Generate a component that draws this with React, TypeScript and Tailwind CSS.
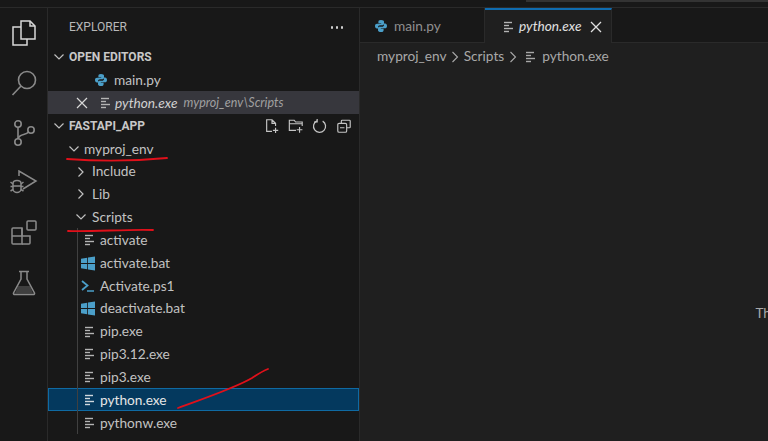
import React from "react";

const FileIcon = ({ c = "#b4b4b4" }: { c?: string }) => (
  <svg width="11" height="12" viewBox="0 0 11 12" className="shrink-0">
    <g stroke={c} strokeWidth="1.4" fill="none">
      <path d="M1 1.5H9" />
      <path d="M1 4.5H6" />
      <path d="M1 7.5H10" />
      <path d="M1 10.5H6" />
    </g>
  </svg>
);

const Win = () => (
  <svg width="14" height="15" viewBox="0 0 14 14" className="shrink-0 -ml-[3px]">
    <path d="M0 2.2 6.2 1.2V6.6H0ZM7 1.1 14 0V6.6H7ZM0 7.4H6.2V12.8L0 11.8ZM7 7.4H14V14L7 12.9Z" fill="#4b9fc9" />
  </svg>
);

const Py = () => (
  <svg width="12" height="12" viewBox="0 0 12 12" className="shrink-0">
    <path d="M6 0C3.8 0 3.4 1 3.4 1.8V3.2H6.2V3.7H2C.8 3.7 0 4.6 0 6s.7 2.4 1.9 2.4H3V7C3 5.9 3.9 5.2 5 5.2H7.6C8.4 5.2 9 4.6 9 3.8V1.8C9 .8 8 0 6 0Z" fill="#4b9fc9" />
    <path d="M6 12c2.2 0 2.6-1 2.6-1.8V8.800H5.800V8.300H10c1.200 0 2-.9 2-2.300s-.7-2.400-1.900-2.400H9V5C9 6.100 8.100 6.800 7 6.800H4.400C3.600 6.800 3 7.400 3 8.200v2C3 11.200 4 12 6 12Z" fill="#4b9fc9" />
  </svg>
);

const Chevron = ({ open }: { open: boolean }) => (
  <svg width="12" height="12" viewBox="0 0 12 12" className="shrink-0">
    <path d={open ? "M1.500 3.500 6 8l4.500-4.500" : "M3.500 1.500 8 6l-4.500 4.500"} fill="none" stroke="#c0c0c0" strokeWidth="1.200" />
  </svg>
);

const Row = ({ children, className = "" }: { children: React.ReactNode; className?: string }) => (
  <div className={`h-[22.85px] pt-[1px] flex items-center whitespace-nowrap shrink-0 ${className}`}>{children}</div>
);

const File = ({ name, icon, selected }: { name: string; icon: React.ReactNode; selected?: boolean }) => (
  <Row className={selected ? "bg-[#04395e] outline outline-1 -outline-offset-1 outline-[#0f6aa3] text-[#e6e6e6]" : ""}>
    <div className="w-[31px] shrink-0" />
    <div className="w-[21px] flex justify-center shrink-0">{icon}</div>
    <span>{name}</span>
  </Row>
);

const Folder = ({ name, open }: { name: string; open: boolean }) => (
  <Row>
    <div className="w-[27px] shrink-0" />
    <Chevron open={open} />
    <span className="ml-[5px]">{name}</span>
  </Row>
);

const Activity = () => (
  <div className="w-[48px] shrink-0 flex flex-col items-center pt-[12px] gap-[24px] border-r border-[#2a2a2a] bg-[#181818] relative">
    <svg width="26" height="26" viewBox="0 0 26 26" fill="none" stroke="#d8d8d8" strokeWidth="1.500">
      <path d="M10 1H19L24 6V19H10Z" />
      <path d="M19 1V6H24" />
      <path d="M10 7H2V25H16V19" />
    </svg>
    <svg width="26" height="26" viewBox="0 0 26 26" fill="none" stroke="#8a8a8a" strokeWidth="1.600">
      <circle cx="16" cy="10" r="8.500" />
      <path d="M10 16 1.500 25" />
    </svg>
    <svg width="24" height="26" viewBox="0 0 24 26" fill="none" stroke="#8a8a8a" strokeWidth="1.600">
      <circle cx="6" cy="4" r="3.200" />
      <circle cx="6" cy="22" r="3.200" />
      <circle cx="19" cy="10" r="3.200" />
      <path d="M6 7V19" />
      <path d="M16.500 12C14 15.500 8 13.500 6.500 18" />
    </svg>
    <svg width="28" height="26" viewBox="0 0 28 26" fill="none" stroke="#8a8a8a" strokeWidth="1.500">
      <path d="M9 6V1L26 11 13 19" />
      <path d="M3 13.500C3 11.500 5 10.500 7 10.500S11 11.500 11 13.500V19C11 21 9 22.500 7 22.500S3 21 3 19Z" />
      <path d="M3 16H11M0.500 12 3 14M13.500 12 11 14M0.500 21 3 19.500M13.500 21 11 19.500M.500 16.500H3M11 16.500H13.500" />
    </svg>
    <svg width="26" height="26" viewBox="0 0 26 26" fill="none" stroke="#8a8a8a" strokeWidth="1.500">
      <rect x="16" y="1" width="9" height="9" rx="1" />
      <path d="M2 8H11V24H2Q1 24 1 23V9Q1 8 2 8Z" />
      <path d="M1 16H19V23Q19 24 18 24H11" />
      <path d="M11 16V8" />
    </svg>
    <svg width="24" height="26" viewBox="0 0 24 26" fill="none" stroke="#8a8a8a" strokeWidth="1.500">
      <path d="M7 1.500H17M9 1.500V9L1.500 23Q1 24.500 3 24.500H21Q23 24.500 22.500 23L15 9V1.500" />
      <path d="M6 16H18L21 23.500H3Z" fill="#8a8a8a" fillOpacity="0.35" stroke="none" />
    </svg>
  </div>
);

const TreeActions = () => (
  <div className="ml-auto mr-[7px] flex items-center gap-[8px]">
    <svg width="16" height="16" viewBox="0 0 18 18" fill="none" stroke="#c4c4c4" strokeWidth="1.300">
      <path d="M9 15H3V2H9L13 6V9M9 2V6H13M13 11V17M10 14H16" />
    </svg>
    <svg width="16" height="16" viewBox="0 0 18 18" fill="none" stroke="#c4c4c4" strokeWidth="1.300">
      <path d="M9 14H1.500V2.500H7L8.500 4.500H16V9M1.500 6.500H16M13 10V16.500M9.800 13.200H16.200" />
    </svg>
    <svg width="16" height="16" viewBox="0 0 18 18" fill="none" stroke="#c4c4c4" strokeWidth="1.400">
      <path d="M5.500 3.200A6.800 6.800 0 1 0 12 3.500" />
      <path d="M5.800 1V4.500H2.300" />
    </svg>
    <svg width="16" height="16" viewBox="0 0 18 18" fill="none" stroke="#c4c4c4" strokeWidth="1.300">
      <rect x="2" y="6" width="10" height="10" rx="1.500" />
      <path d="M6 6V3.500Q6 2.500 7 2.500H15Q16 2.500 16 3.500V10Q16 11 15 11H12M4.500 11H9.500" />
    </svg>
  </div>
);

const Sidebar = () => (
  <div className="w-[312px] shrink-0 flex flex-col bg-[#181818] border-r border-[#2a2a2a] text-[#c2c2c2] overflow-hidden">
    <div className="h-[37.500px] shrink-0 flex items-center pt-[1px] pl-[21px] pr-[16px] text-[12px] text-[#b8b8b8] font-['Roboto']">
      <span>EXPLORER</span>
      <span className="ml-auto flex gap-[2.500px]">
        <span className="w-[2.500px] h-[2.500px] rounded-full bg-[#d0d0d0]" />
        <span className="w-[2.500px] h-[2.500px] rounded-full bg-[#d0d0d0]" />
        <span className="w-[2.500px] h-[2.500px] rounded-full bg-[#d0d0d0]" />
      </span>
    </div>
    <Row className="font-bold text-[12px] text-[#c8c8c8] font-['Roboto']">
      <div className="w-[5px] shrink-0" />
      <Chevron open />
      <span className="ml-[4px]">OPEN EDITORS</span>
    </Row>
    <Row>
      <div className="w-[47px] shrink-0" />
      <Py />
      <span className="ml-[7px]">main.py</span>
    </Row>
    <Row className="bg-[#37373d] italic">
      <svg width="12" height="12" viewBox="0 0 12 12" className="ml-[28px] shrink-0">
        <path d="M1 1 11 11M11 1 1 11" stroke="#d8d8d8" strokeWidth="1.200" />
      </svg>
      <div className="ml-[12px]"><FileIcon /></div>
      <span className="ml-[4px] text-[#d0d0d0]">python.exe</span>
      <span className="ml-[6px] text-[12.500px] text-[#a0a0a0]">myproj_env\Scripts</span>
    </Row>
    <Row className="font-bold text-[12px] text-[#c8c8c8] font-['Roboto']">
      <div className="w-[5px] shrink-0" />
      <Chevron open />
      <span className="ml-[4px]">FASTAPI_APP</span>
      <TreeActions />
    </Row>
    <Row>
      <div className="w-[20px] shrink-0" />
      <Chevron open />
      <span className="ml-[4px]">myproj_env</span>
    </Row>
    <Folder name="Include" open={false} />
    <Folder name="Lib" open={false} />
    <Folder name="Scripts" open />
    <div className="relative flex flex-col">
      <div className="absolute left-[29px] top-0 bottom-0 w-px bg-[#404040]" />
      <File name="activate" icon={<FileIcon />} />
      <File name="activate.bat" icon={<Win />} />
      <File
        name="Activate.ps1"
        icon={
          <svg width="14" height="12" viewBox="0 0 14 12" className="shrink-0 -ml-[3px]">
            <path d="M1 1 6.500 5.500 1 10" fill="none" stroke="#4b9fc9" strokeWidth="1.800" />
            <path d="M6 11H13" stroke="#4b9fc9" strokeWidth="1.500" />
          </svg>
        }
      />
      <File name="deactivate.bat" icon={<Win />} />
      <File name="pip.exe" icon={<FileIcon />} />
      <File name="pip3.12.exe" icon={<FileIcon />} />
      <File name="pip3.exe" icon={<FileIcon />} />
      <File name="python.exe" icon={<FileIcon c="#cfd8de" />} selected />
      <File name="pythonw.exe" icon={<FileIcon />} />
    </div>
  </div>
);

const Editor = () => (
  <div className="flex-1 min-w-0 flex flex-col bg-[#1f1f1f] text-[#a8a8a8] relative overflow-hidden">
    <div className="h-[35px] shrink-0 flex bg-[#181818]">
      <div className="w-[125px] shrink-0 flex items-center pl-[15px] pt-[2px] border-r border-b border-[#2a2a2a] text-[#8f8f8f]">
        <Py />
        <span className="ml-[7px]">main.py</span>
      </div>
      <div className="w-[127px] shrink-0 flex items-center pl-[18px] bg-[#1f1f1f] border-t-2 border-t-[#0f6cb0] border-r border-r-[#2a2a2a] text-[#e0e0e0]">
        <FileIcon />
        <span className="ml-[5px] italic">python.exe</span>
        <svg width="12" height="12" viewBox="0 0 12 12" className="ml-[9px] shrink-0">
          <path d="M1 1 11 11M11 1 1 11" stroke="#e0e0e0" strokeWidth="1.300" />
        </svg>
      </div>
      <div className="flex-1 border-b border-[#2a2a2a]" />
    </div>
    <div className="h-[27px] shrink-0 flex items-center pl-[17px]">
      <span>myproj_env</span>
      <svg width="8" height="12" viewBox="0 0 8 12" className="ml-[4px] mr-[5px] shrink-0">
        <path d="M1.500 1 6.500 6 1.500 11" fill="none" stroke="#a8a8a8" strokeWidth="1.100" />
      </svg>
      <span>Scripts</span>
      <svg width="8" height="12" viewBox="0 0 8 12" className="ml-[5px] mr-[8px] shrink-0">
        <path d="M1.500 1 6.500 6 1.500 11" fill="none" stroke="#a8a8a8" strokeWidth="1.100" />
      </svg>
      <FileIcon c="#a8a8a8" />
      <span className="ml-[6px]">python.exe</span>
    </div>
    <div className="flex-1 flex justify-end pt-[233px] text-[#a8a8a8] overflow-hidden">
      <span className="whitespace-nowrap -mr-[3px]">Th</span>
    </div>
  </div>
);

export default function App() {
  return (
    <div className="w-[768px] h-[441px] flex flex-col overflow-hidden bg-[#181818] relative text-[13.700px]" style={{ fontFamily: 'Lato, "Noto Sans", sans-serif' }}>
      <div className="h-[8px] shrink-0 bg-[#181818] border-b border-[#2a2a2a] flex justify-end">
        <div className="w-[242px] h-[2px] bg-[#333333]" />
      </div>
      <div className="flex-1 min-h-0 flex">
        <Activity />
        <Sidebar />
        <Editor />
      </div>
      <svg className="absolute inset-0 pointer-events-none" width="768" height="441" fill="none" stroke="#e0101a" strokeWidth="1.800" strokeLinecap="round">
        <path d="M67 159C95 161 135 161 167 158" />
        <path d="M68 231C90 232 130 229 153 230" />
        <path d="M178 408C205 398 235 388 252 378 258 374 263 371 268 369" />
      </svg>
    </div>
  );
}
